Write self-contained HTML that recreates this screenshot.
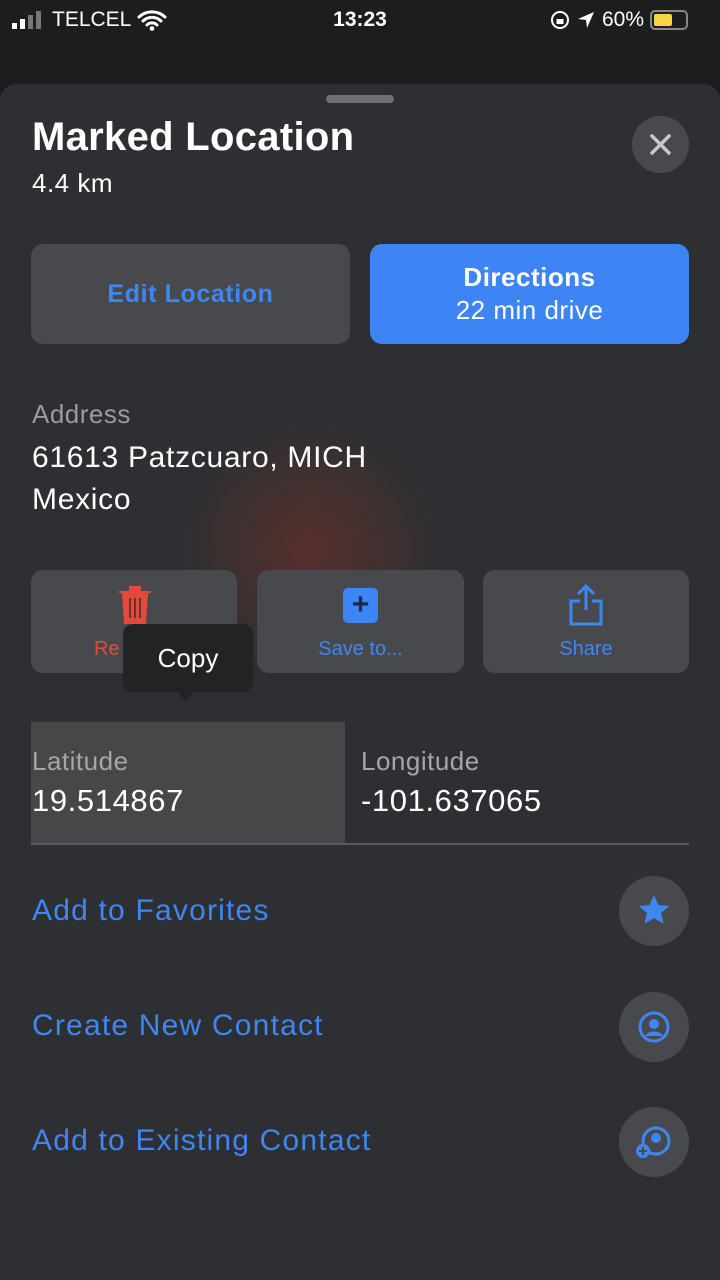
<!DOCTYPE html>
<html><head><meta charset="utf-8"><style>
*{margin:0;padding:0;box-sizing:border-box}
body{width:720px;height:1280px;background:#1c1d1f;font-family:"Liberation Sans",sans-serif;color:#fff;position:relative;overflow:hidden}
.a{position:absolute}
.sheet{left:0;top:84px;width:720px;height:1196px;background:#2e2f32;border-radius:16px 16px 0 0}
.glow{left:180px;top:420px;width:260px;height:260px;border-radius:50%;background:radial-gradient(circle,rgba(120,50,40,.55),rgba(46,47,50,0) 70%)}
.btn{background:#48494c;border-radius:12px}
.blue{color:#3e86f2}
.circ{width:70px;height:70px;border-radius:50%;background:#48494c;left:619px}
.row{font-size:30px;letter-spacing:1.2px}
</style></head><body>
<div class="a" style="left:12px;top:8px;font-size:21px;display:flex;align-items:center;gap:6px">
<svg width="34" height="20"><rect x="0" y="13" width="5" height="6" fill="#fff"/><rect x="8" y="9" width="5" height="10" fill="#fff"/><rect x="16" y="5" width="5" height="14" fill="#777"/><rect x="24" y="1" width="5" height="18" fill="#777"/></svg>
<span>TELCEL</span>
<svg width="30" height="22" viewBox="0 0 30 22"><path d="M2 8a19 19 0 0 1 26 0M6 12a13 13 0 0 1 18 0M10 16a7 7 0 0 1 10 0" stroke="#fff" stroke-width="3" fill="none" stroke-linecap="round"/><circle cx="15" cy="19.5" r="2.3" fill="#fff"/></svg></div>
<div class="a" style="left:0;width:720px;top:8px;text-align:center;font-size:21px;font-weight:bold">13:23</div>
<div class="a" style="left:550px;top:8px;font-size:21px;display:flex;align-items:center;gap:6px">
<svg width="20" height="20"><circle cx="10" cy="10" r="8" stroke="#fff" stroke-width="2" fill="none"/><rect x="6.5" y="9" width="7" height="5" fill="#fff"/></svg>
<svg width="20" height="20"><path d="M18 2L2 9l8 1 1 8z" fill="#fff"/></svg>
<span>60%</span>
<div style="width:38px;height:20px;border:2px solid #888;border-radius:5px;padding:2px"><div style="width:18px;height:12px;background:#f5d545;border-radius:2px"></div></div></div>
<div class="a sheet"></div>
<div class="a glow"></div>
<div class="a" style="left:326px;top:95px;width:68px;height:8px;border-radius:4px;background:#6e6f73"></div>
<div class="a" style="left:32px;top:115px;font-size:40px;font-weight:bold;letter-spacing:0.3px">Marked Location</div>
<div class="a" style="left:32px;top:168px;font-size:26px;letter-spacing:0.5px">4.4 km</div>
<div class="a circ" style="left:632px;top:116px;width:57px;height:57px;background:#48494c"><svg class="a" style="left:17px;top:17px" width="23" height="23"><path d="M3 3l17 17M20 3L3 20" stroke="#c8c8cc" stroke-width="3.5" stroke-linecap="round"/></svg></div>
<div class="a btn" style="left:31px;top:244px;width:319px;height:100px;text-align:center;line-height:100px;font-size:25px;font-weight:bold;letter-spacing:0.6px"><span class="blue">Edit Location</span></div>
<div class="a" style="left:370px;top:244px;width:319px;height:100px;background:#3d85f5;border-radius:12px;text-align:center;padding-top:18px"><div style="font-size:26px;font-weight:bold;letter-spacing:0.5px">Directions</div><div style="font-size:26px;margin-top:2px;letter-spacing:0.5px">22 min drive</div></div>
<div class="a" style="left:32px;top:399px;font-size:26px;color:#9a9a9f;letter-spacing:0.5px">Address</div>
<div class="a" style="left:32px;top:437px;font-size:30px;line-height:42px;letter-spacing:0.7px">61613 Patzcuaro, MICH<br>Mexico</div>
<div class="a btn" style="left:31px;top:570px;width:206px;height:103px"></div>
<div class="a btn" style="left:257px;top:570px;width:207px;height:103px"></div>
<div class="a btn" style="left:483px;top:570px;width:206px;height:103px"></div>
<svg class="a" style="left:116px;top:585px" width="38" height="40"><path d="M3 7h32M14 7V2h10v5M7 9l2 29h20l2-29z" fill="#e5493b" stroke="#e5493b" stroke-width="2"/><path d="M14 13v20M19 13v20M24 13v20" stroke="#2e2f32" stroke-width="1.5"/></svg>
<div class="a" style="left:94px;top:638px;font-size:20px;color:#e5493b">Re</div>
<div class="a" style="left:343px;top:588px;width:35px;height:35px;background:#3d85f5;border-radius:5px;color:#1a2a44;font-size:30px;line-height:33px;text-align:center;font-weight:bold">+</div>
<div class="a blue" style="left:257px;width:207px;top:638px;text-align:center;font-size:20px">Save to...</div>
<svg class="a" style="left:567px;top:583px" width="38" height="44"><path d="M19 3v24M11 11l8-8 8 8M13 18H4v23h30V18h-9" stroke="#3e86f2" stroke-width="3" fill="none"/></svg>
<div class="a blue" style="left:483px;width:206px;top:638px;text-align:center;font-size:20px">Share</div>
<div class="a" style="left:123px;top:624px;width:130px;height:68px;background:#222325;border-radius:10px;font-size:26px;text-align:center;line-height:68px">Copy</div>
<div class="a" style="left:176px;top:690px;width:0;height:0;border-left:10px solid transparent;border-right:10px solid transparent;border-top:12px solid #222325"></div>
<div class="a" style="left:31px;top:722px;width:314px;height:122px;background:#464749"></div>
<div class="a" style="left:32px;top:746px;font-size:26px;color:#a5a5aa;letter-spacing:0.5px">Latitude</div>
<div class="a" style="left:32px;top:783px;font-size:31px;letter-spacing:0.6px">19.514867</div>
<div class="a" style="left:361px;top:746px;font-size:26px;color:#a5a5aa;letter-spacing:0.5px">Longitude</div>
<div class="a" style="left:361px;top:783px;font-size:31px;letter-spacing:0.6px">-101.637065</div>
<div class="a" style="left:31px;top:843px;width:658px;height:2px;background:#5a5b5e"></div>
<div class="a blue row" style="left:32px;top:894px">Add to Favorites</div>
<div class="a circ" style="top:876px"><svg class="a" style="left:18px;top:17px" width="34" height="34" viewBox="0 0 24 24"><path d="M12 1.5l3.2 7 7.5.7-5.7 5 1.7 7.4L12 17.8l-6.7 3.8L7 14.2 1.3 9.2l7.5-.7z" fill="#3e86f2"/></svg></div>
<div class="a blue row" style="left:32px;top:1009px">Create New Contact</div>
<div class="a circ" style="top:992px"><svg class="a" style="left:19px;top:19px" width="32" height="32"><circle cx="16" cy="16" r="14" stroke="#3e86f2" stroke-width="3" fill="none"/><circle cx="16" cy="13" r="5" fill="#3e86f2"/><path d="M7 25c3-6 15-6 18 0" fill="#3e86f2"/></svg></div>
<div class="a blue row" style="left:32px;top:1124px">Add to Existing Contact</div>
<div class="a circ" style="top:1107px"><svg class="a" style="left:15px;top:18px" width="40" height="36"><circle cx="22" cy="16" r="13" stroke="#3e86f2" stroke-width="3" fill="none"/><circle cx="22" cy="13" r="5" fill="#3e86f2"/><circle cx="9" cy="26" r="7" fill="#3e86f2"/><path d="M9 22v8M5 26h8" stroke="#48494c" stroke-width="2"/></svg></div>
</body></html>
